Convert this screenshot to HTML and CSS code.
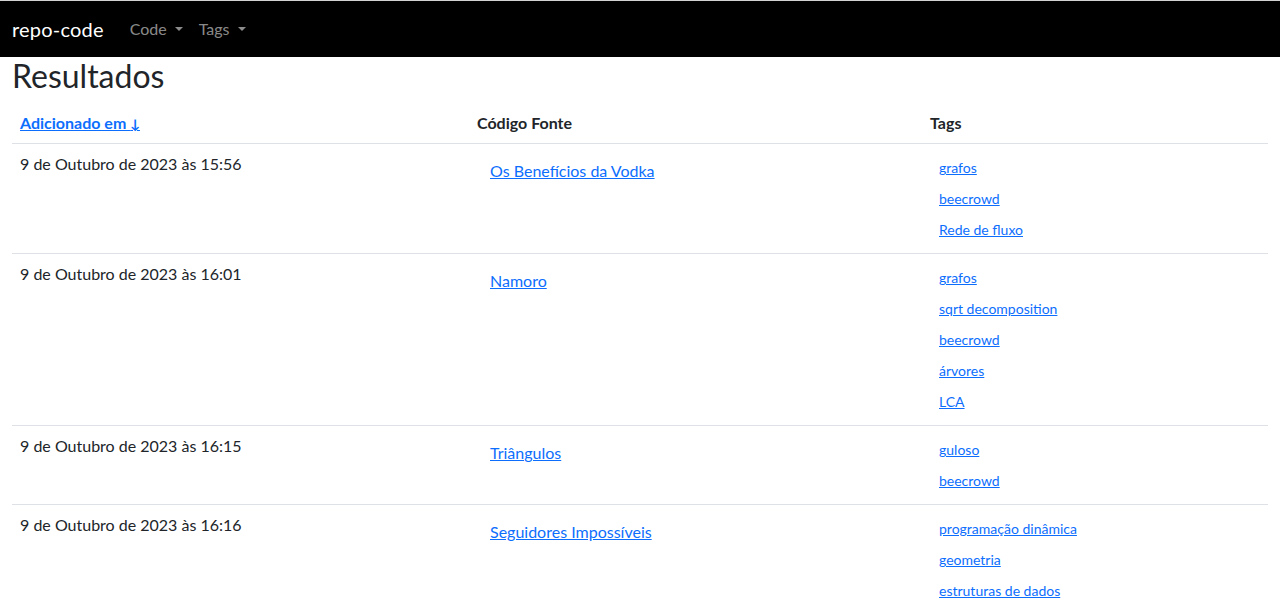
FILE: index.html
```html
<!DOCTYPE html>
<html lang="pt-BR">
<head>
<meta charset="utf-8">
<title>repo-code</title>
<link rel="stylesheet" href="styles.css">
</head>
<body>
<nav class="navbar">
  <div class="nav-inner">
    <a class="brand" href="#">repo-code</a>
    <ul class="nav-list">
      <li><a class="nav-link dropdown-toggle" href="#">Code</a></li>
      <li><a class="nav-link dropdown-toggle" href="#">Tags</a></li>
    </ul>
  </div>
</nav>
<main class="container">
  <h2 class="title">Resultados</h2>
  <table class="table">
    <thead>
      <tr>
        <th class="col-date"><a class="sort-link" href="#">Adicionado em <span class="arrow">↓</span></a></th>
        <th class="col-code">Código Fonte</th>
        <th class="col-tags">Tags</th>
      </tr>
    </thead>
    <tbody>
      <tr>
        <td>9 de Outubro de 2023 às 15:56</td>
        <td><a class="btn-link" href="#">Os Benefícios da Vodka</a></td>
        <td><div class="tags">
          <a class="btn-link sm" href="#">grafos</a>
          <a class="btn-link sm" href="#">beecrowd</a>
          <a class="btn-link sm" href="#">Rede de fluxo</a>
        </div></td>
      </tr>
      <tr>
        <td>9 de Outubro de 2023 às 16:01</td>
        <td><a class="btn-link" href="#">Namoro</a></td>
        <td><div class="tags">
          <a class="btn-link sm" href="#">grafos</a>
          <a class="btn-link sm" href="#">sqrt decomposition</a>
          <a class="btn-link sm" href="#">beecrowd</a>
          <a class="btn-link sm" href="#">árvores</a>
          <a class="btn-link sm" href="#">LCA</a>
        </div></td>
      </tr>
      <tr>
        <td>9 de Outubro de 2023 às 16:15</td>
        <td><a class="btn-link" href="#">Triângulos</a></td>
        <td><div class="tags">
          <a class="btn-link sm" href="#">guloso</a>
          <a class="btn-link sm" href="#">beecrowd</a>
        </div></td>
      </tr>
      <tr>
        <td>9 de Outubro de 2023 às 16:16</td>
        <td><a class="btn-link" href="#">Seguidores Impossíveis</a></td>
        <td><div class="tags">
          <a class="btn-link sm" href="#">programação dinâmica</a>
          <a class="btn-link sm" href="#">geometria</a>
          <a class="btn-link sm" href="#">estruturas de dados</a>
        </div></td>
      </tr>
    </tbody>
  </table>
</main>
</body>
</html>
```
FILE: styles.css
```css
* { box-sizing: border-box; }
html, body { margin: 0; padding: 0; }
body {
  font-family: Lato, "Noto Sans", sans-serif;
  font-size: 16px;
  line-height: 1.5;
  color: #212529;
  background: #fff;
}
a { color: #0d6efd; }

.navbar {
  background: #000;
  border-top: 1px solid #d2d2d2;
  padding: 8px 0;
}
.nav-inner {
  display: flex;
  align-items: center;
  padding: 0 12px;
}
.brand {
  color: #fff;
  text-decoration: none;
  font-size: 20px;
  line-height: 30px;
  padding: 5px 0;
  margin-right: 18px;
  letter-spacing: 0.2px;
}
.nav-list {
  display: flex;
  list-style: none;
  margin: 0;
  padding: 0;
}
.nav-link {
  display: block;
  padding: 8px;
  color: rgba(255,255,255,.55);
  text-decoration: none;
  font-size: 16px;
  line-height: 24px;
}
.dropdown-toggle::after {
  content: "";
  display: inline-block;
  margin-left: .5em;
  vertical-align: .255em;
  border-top: .3em solid;
  border-right: .3em solid transparent;
  border-left: .3em solid transparent;
  border-bottom: 0;
}

.container { padding: 0 12px; }
.title {
  font-size: 32px;
  font-weight: 400;
  line-height: 1.2;
  margin: 0 0 8px;
}

.table {
  width: 100%;
  border-collapse: collapse;
}
.table th, .table td {
  padding: 8px;
  text-align: left;
  vertical-align: top;
  border-bottom: 1px solid #dee2e6;
}
.table tbody tr:last-child td { border-bottom: 0; }
.table th { font-weight: 700; }
.col-date { width: 457px; }
.col-code { width: 453px; }
.sort-link { color: #0d6efd; text-decoration: underline; }
.arrow { font-size: 13px; font-weight: 900; }

.btn-link {
  display: inline-block;
  padding: 6px 12px;
  border: 1px solid transparent;
  font-size: 16px;
  line-height: 24px;
  color: #0d6efd;
  text-decoration: underline;
}
.tags {
  display: flex;
  flex-direction: column;
  align-items: flex-start;
}
.btn-link.sm {
  padding: 4px 8px;
  font-size: 14px;
  line-height: 21px;
}
```
